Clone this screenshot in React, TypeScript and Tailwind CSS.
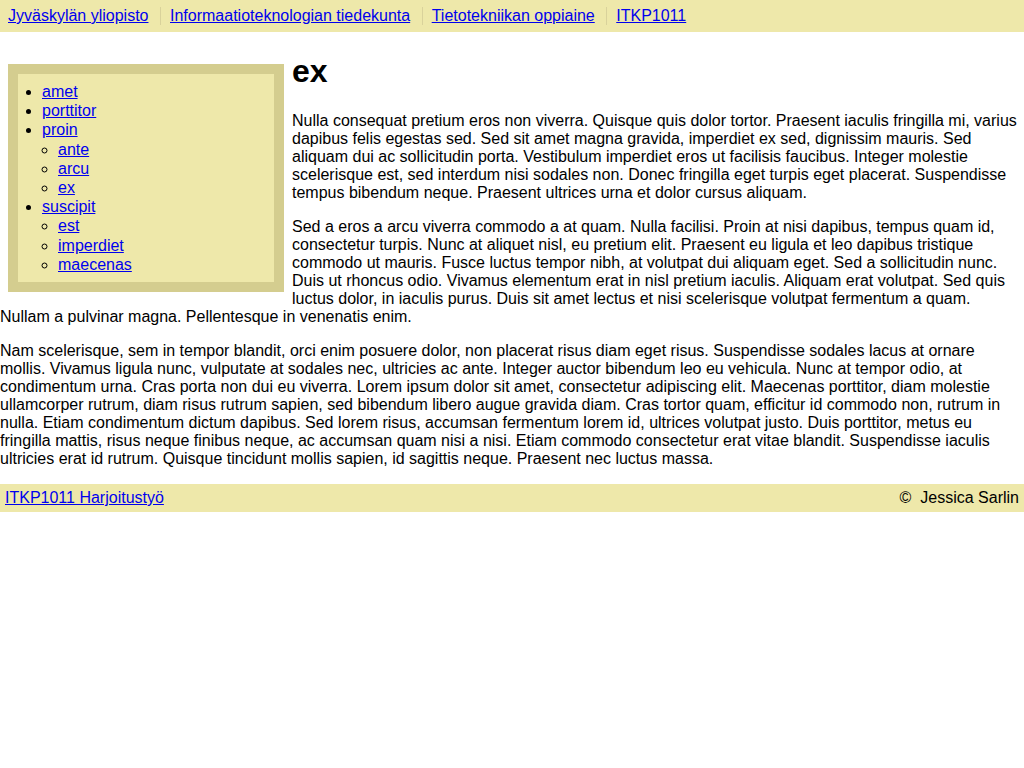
import React from 'react';

// Breadcrumb trail in the top bar
const crumbs = [
    'Jyväskylän yliopisto',
    'Informaatioteknologian tiedekunta',
    'Tietotekniikan oppiaine',
    'ITKP1011',
];

// Side navigation: top level items with optional children
const navItems: { name: string; children?: string[] }[] = [
    { name: 'amet' },
    { name: 'porttitor' },
    { name: 'proin', children: ['ante', 'arcu', 'ex'] },
    { name: 'suscipit', children: ['est', 'imperdiet', 'maecenas'] },
];

const paragraphs = [
    'Nulla consequat pretium eros non viverra. Quisque quis dolor tortor. Praesent iaculis fringilla mi, varius dapibus felis egestas sed. Sed sit amet magna gravida, imperdiet ex sed, dignissim mauris. Sed aliquam dui ac sollicitudin porta. Vestibulum imperdiet eros ut facilisis faucibus. Integer molestie scelerisque est, sed interdum nisi sodales non. Donec fringilla eget turpis eget placerat. Suspendisse tempus bibendum neque. Praesent ultrices urna et dolor cursus aliquam.',
    'Sed a eros a arcu viverra commodo a at quam. Nulla facilisi. Proin at nisi dapibus, tempus quam id, consectetur turpis. Nunc at aliquet nisl, eu pretium elit. Praesent eu ligula et leo dapibus tristique commodo ut mauris. Fusce luctus tempor nibh, at volutpat dui aliquam eget. Sed a sollicitudin nunc. Duis ut rhoncus odio. Vivamus elementum erat in nisl pretium iaculis. Aliquam erat volutpat. Sed quis luctus dolor, in iaculis purus. Duis sit amet lectus et nisi scelerisque volutpat fermentum a quam. Nullam a pulvinar magna. Pellentesque in venenatis enim.',
    'Nam scelerisque, sem in tempor blandit, orci enim posuere dolor, non placerat risus diam eget risus. Suspendisse sodales lacus at ornare mollis. Vivamus ligula nunc, vulputate at sodales nec, ultricies ac ante. Integer auctor bibendum leo eu vehicula. Nunc at tempor odio, at condimentum urna. Cras porta non dui eu viverra. Lorem ipsum dolor sit amet, consectetur adipiscing elit. Maecenas porttitor, diam molestie ullamcorper rutrum, diam risus rutrum sapien, sed bibendum libero augue gravida diam. Cras tortor quam, efficitur id commodo non, rutrum in nulla. Etiam condimentum dictum dapibus. Sed lorem risus, accumsan fermentum lorem id, ultrices volutpat justo. Duis porttitor, metus eu fringilla mattis, risus neque finibus neque, ac accumsan quam nisi a nisi. Etiam commodo consectetur erat vitae blandit. Suspendisse iaculis ultricies erat id rutrum. Quisque tincidunt mollis sapien, id sagittis neque. Praesent nec luctus massa.',
];

const linkClass = 'text-[#0000ee] underline';

const App: React.FC = () => {
    return (
        <div className="font-['Liberation_Sans',Arial,sans-serif] text-[16px] leading-[normal] text-black bg-white min-h-[768px]">
            {/* Top bar */}
            <ul className="flex items-center h-[32px] px-[8px] bg-[#eee8aa]">
                {crumbs.map((c, i) => (
                    <li key={c} className={i === 0 ? '' : 'ml-[11.5px] pl-[9px] border-l border-[#d9d29b]'}>
                        <a href="#" className={linkClass}>{c}</a>
                    </li>
                ))}
            </ul>

            {/* Main content with floated side nav */}
            <div className="flow-root">
                <nav className="float-left w-[276px] mt-[32px] ml-[8px] mr-[8px] mb-[8px] border-[10px] border-[#d4cd8f] bg-[#eee8aa] py-[8px]">
                    <ul className="list-disc pl-[24px] leading-[19.2px]">
                        {navItems.map(item => (
                            <li key={item.name}>
                                <a href="#" className={linkClass}>{item.name}</a>
                                {item.children && (
                                    <ul className="list-[circle] pl-[16px]">
                                        {item.children.map(ch => (
                                            <li key={ch}>
                                                <a href="#" className={linkClass}>{ch}</a>
                                            </li>
                                        ))}
                                    </ul>
                                )}
                            </li>
                        ))}
                    </ul>
                </nav>
                <h1 className="text-[32px] font-bold my-[21.44px]">ex</h1>
                {paragraphs.map((p, i) => (
                    <p key={i} className="my-[16px]">{p}</p>
                ))}
            </div>

            {/* Footer */}
            <div className="flex justify-between px-[5px] py-[5px] bg-[#eee8aa]">
                <a href="#" className={linkClass}>ITKP1011 Harjoitustyö</a>
                <span>{'©\u00a0 Jessica Sarlin'}</span>
            </div>
        </div>
    );
};

export default App;
